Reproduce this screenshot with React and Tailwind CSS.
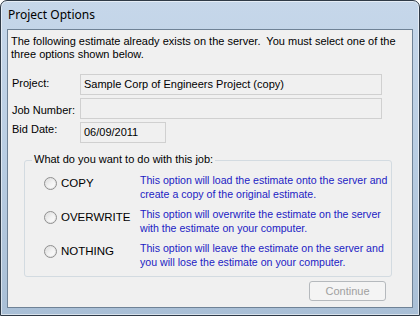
export default function App() {
  return (
    <div className="w-[420px] h-[316px] overflow-hidden bg-white">
      <div className="w-[420px] h-[316px] flex flex-col rounded-t-[7px] border border-[#2f3a47] bg-gradient-to-b from-[#c6d7ea] via-[#b9cde2] to-[#a9bfd6] shadow-[inset_0_0_0_1px_rgba(255,255,255,0.55)]">
        {/* title bar */}
        <div className="h-[28px] flex items-center pl-[7px] text-[12px] text-black font-['Noto_Sans',sans-serif]">
          Project Options
        </div>

        {/* client area */}
        <div className="mx-[6px] w-[406px] h-[279px] border border-[#6f8296] bg-[#f0f0f0] font-['Liberation_Sans',Arial,sans-serif] text-[11px] text-black flex flex-col">
          <p className="pl-[3px] pt-[5px] leading-[13px] whitespace-pre">
            {'The following estimate already exists on the server.  You must select one of the\nthree options shown below.'}
          </p>

          <div className="mt-[13px] flex flex-col gap-[3px] pl-[4px]">
            <Field label="Project:" value="Sample Corp of Engineers Project (copy)" width="w-[302px]" />
            <Field label="Job Number:" value="" width="w-[302px]" labelPad="pt-[6px]" />
            <Field label="Bid Date:" value="06/09/2011" width="w-[86px]" labelPad="pt-[1px]" />
          </div>

          {/* group box */}
          <div className="relative mt-[17px] ml-[16px] w-[368px] h-[117px] rounded-[3px] border border-[#d3dbe1]">
            <span className="absolute -top-[8px] left-[7px] bg-[#f0f0f0] px-[2px] leading-[13px]">
              What do you want to do with this job:
            </span>
            <div className="flex flex-col gap-[8px] pt-[15px] pl-[19px]">
              <Option label="COPY" lines={['This option will load the estimate onto the server and', 'create a copy of the original estimate.']} />
              <Option label="OVERWRITE" lines={['This option will overwrite the estimate on the server', 'with the estimate on your computer.']} />
              <Option label="NOTHING" lines={['This option will leave the estimate on the server and', 'you will lose the estimate on your computer.']} />
            </div>
          </div>

          <div className="flex justify-end pr-[26px] pt-[4px]">
            <button className="w-[77px] h-[20px] rounded-[3px] border border-[#b5b9bd] bg-[#f4f4f4] text-[11px] text-[#a0a0a0] leading-none">
              Continue
            </button>
          </div>
        </div>
      </div>
    </div>
  )
}

function Field({ label, value, width, labelPad = 'pt-[3px]' }) {
  return (
    <div className="flex items-start">
      <span className={`w-[68px] leading-[13px] ${labelPad}`}>{label}</span>
      <div className={`${width} h-[21px] border border-[#d0d0d0] bg-[#f0f0f0] flex items-center pl-[3px]`}>
        {value}
      </div>
    </div>
  )
}

function Option({ label, lines }) {
  return (
    <div className="flex items-start h-[26px]">
      <div className="w-[96px] shrink-0 flex items-center gap-[4px]">
        <span className="w-[13px] h-[13px] rounded-full border border-[#8f8f8f] bg-gradient-to-br from-[#d8d8d8] via-[#f2f2f2] to-[#ffffff] shadow-[inset_0_0_0_1px_#e6e6e6]" />
        <span className="text-[11.5px] leading-[13px] pt-[1px]">{label}</span>
      </div>
      <div className="text-[#1c1cc4] text-[10.6px] leading-[13.5px] -mt-[2px] whitespace-nowrap">
        {lines.map((l) => (
          <div key={l}>{l}</div>
        ))}
      </div>
    </div>
  )
}
